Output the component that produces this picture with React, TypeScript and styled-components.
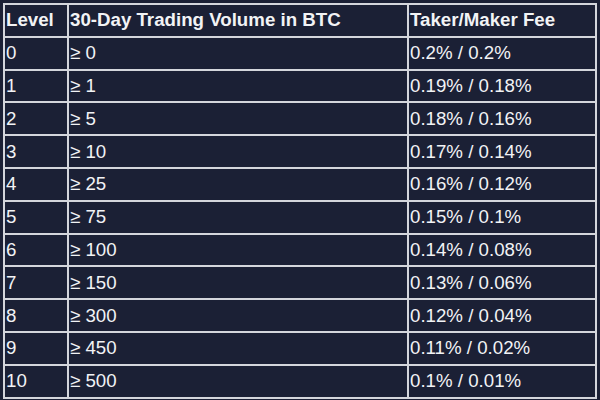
import styled, { createGlobalStyle } from "styled-components";

const GlobalStyle = createGlobalStyle`
  html, body {
    margin: 0;
    padding: 0;
    background: #1b2035;
  }
  body {
    width: 600px;
    height: 400px;
    overflow: hidden;
    font-family: "Liberation Sans", Arial, sans-serif;
  }
`;

const tiers = [
  ["0", "0", "0.2% / 0.2%"],
  ["1", "1", "0.19% / 0.18%"],
  ["2", "5", "0.18% / 0.16%"],
  ["3", "10", "0.17% / 0.14%"],
  ["4", "25", "0.16% / 0.12%"],
  ["5", "75", "0.15% / 0.1%"],
  ["6", "100", "0.14% / 0.08%"],
  ["7", "150", "0.13% / 0.06%"],
  ["8", "300", "0.12% / 0.04%"],
  ["9", "450", "0.11% / 0.02%"],
  ["10", "500", "0.1% / 0.01%"],
];

export default function App() {
  return (
    <>
      <GlobalStyle />
      <Page>
        <FeeTable>
          <thead>
            <Row>
              <HeadCell $width={60}>Level</HeadCell>
              <HeadCell $width={336}>30-Day Trading Volume in BTC</HeadCell>
              <HeadCell>Taker/Maker Fee</HeadCell>
            </Row>
          </thead>
          <tbody>
            {tiers.map(([level, volume, fee]) => (
              <Row key={level}>
                <Cell>{level}</Cell>
                <Cell>≥ {volume}</Cell>
                <Cell>{fee}</Cell>
              </Row>
            ))}
          </tbody>
        </FeeTable>
      </Page>
    </>
  );
}

const Page = styled.div`
  padding: 3px;
`;

const FeeTable = styled.table`
  width: 594px;
  border-collapse: collapse;
  border: 2px solid #d4d6dc;
  color: #f2f3f5;
  font-size: 18.7px;
  table-layout: fixed;
`;

const Row = styled.tr`
  height: 32.8px;
`;

const HeadCell = styled.th<{ $width?: number }>`
  width: ${(p) => (p.$width ? `${p.$width}px` : "auto")};
  border: 2px solid #d4d6dc;
  padding: 0 1px;
  text-align: left;
  font-weight: bold;
  white-space: nowrap;
`;

const Cell = styled.td`
  border: 2px solid #d4d6dc;
  padding: 0 1px;
  white-space: nowrap;
`;
